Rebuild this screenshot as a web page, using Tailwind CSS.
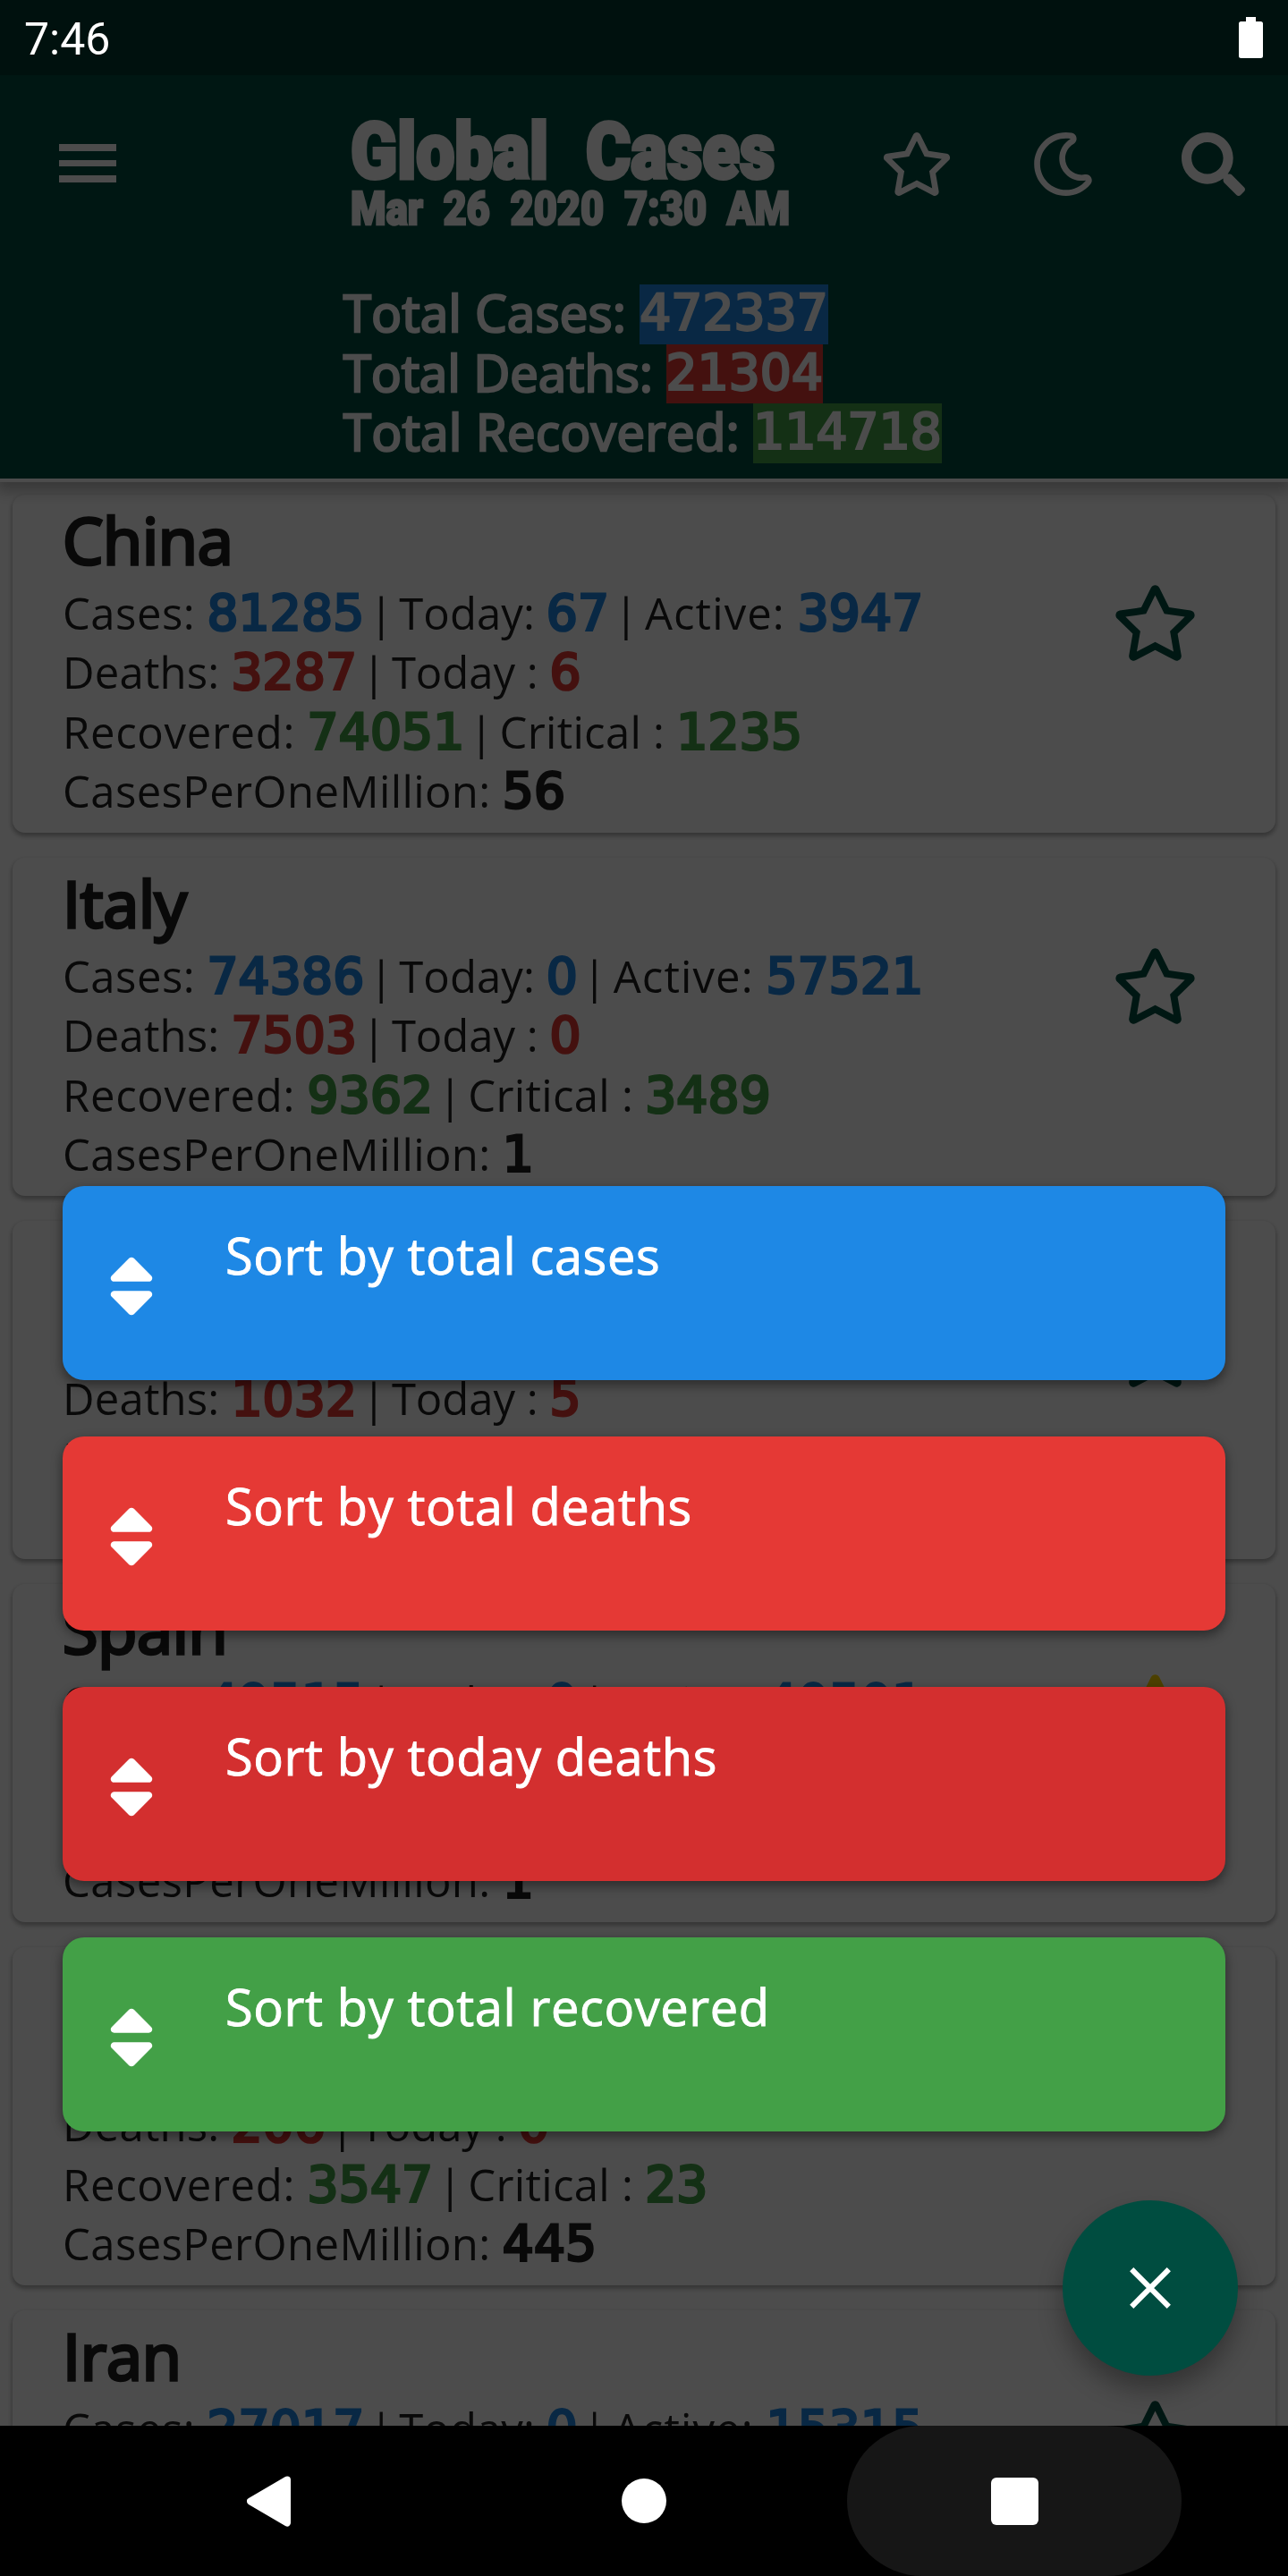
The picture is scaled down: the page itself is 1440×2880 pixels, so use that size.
<!DOCTYPE html>
<html lang="en">
<head>
<meta charset="utf-8">
<title>Global Cases</title>
<script src="https://cdn.jsdelivr.net/npm/@tailwindcss/browser@4"></script>
</head>
<body class="bg-black">
<svg class="hidden">
  <symbol id="star" viewBox="0 0 576 512"><path d="M528.1 171.5L382 150.2 316.7 17.8c-11.7-23.6-45.6-23.9-57.4 0L194 150.2 47.9 171.5c-26.2 3.8-36.7 36.1-17.7 54.6l105.7 103-25 145.5c-4.5 26.3 23.2 46 46.4 33.7L288 439.6l130.7 68.7c23.2 12.2 50.9-7.4 46.4-33.7l-25-145.5 105.7-103c19-18.5 8.5-50.8-17.7-54.6zM388.6 312.3l23.7 138.4L288 385.4l-124.3 65.3 23.7-138.4-100.6-98 139-20.2 62.2-126 62.2 126 139 20.2-100.6 98z"/></symbol>
  <symbol id="star-solid" viewBox="0 0 576 512"><path d="M528.1 171.5L382 150.2 316.7 17.8c-11.7-23.6-45.6-23.9-57.4 0L194 150.2 47.9 171.5c-26.2 3.8-36.7 36.1-17.7 54.6l105.7 103-25 145.5c-4.5 26.3 23.2 46 46.4 33.7L288 439.6l130.7 68.7c23.2 12.2 50.9-7.4 46.4-33.7l-25-145.5 105.7-103c19-18.5 8.5-50.8-17.7-54.6z"/></symbol>
  <symbol id="sort" viewBox="0 0 320 512"><path d="M41 288h238c21.4 0 32.1 25.9 17 41L177 448c-9.4 9.4-24.6 9.4-33.9 0L24 329c-15.1-15.1-4.4-41 17-41zm255-105L177 64c-9.4-9.4-24.6-9.4-33.9 0L24 183c-15.1 15.1-4.4 41 17 41h238c21.4 0 32.1-25.9 17-41z"/></symbol>
</svg>
<div class="relative flex h-[2880px] w-[1440px] flex-col overflow-hidden font-['Open_Sans',sans-serif]">

  <!-- App content -->
  <div class="isolate flex h-[2712px] flex-col overflow-hidden bg-white">
    <header class="relative z-10 h-[535px] shrink-0 bg-[#004d40] text-white shadow-[0_4px_0_#fdfdfd,0_10px_16px_4px_rgba(0,0,0,0.28)]">
      <div class="h-[84px] bg-black/25"></div>
      <div class="flex h-[200px] items-start pt-16 pl-[66px]">
        <div class="mt-[13px] flex w-[64px] flex-col gap-[10px]">
          <div class="h-[7.5px] bg-white"></div><div class="h-[7.5px] bg-white"></div><div class="h-[7.5px] bg-white"></div>
        </div>
        <div class="-mt-[22px] ml-[262px] w-[593px] whitespace-nowrap font-['Roboto',sans-serif] font-black">
          <div class="origin-left scale-x-[0.88] text-[87px] leading-[86px] [word-spacing:26px] [-webkit-text-stroke:4px_white]">Global Cases</div>
          <div class="-mt-[4px] origin-left scale-x-[0.87] text-[52px] leading-[52px] [word-spacing:13px] [-webkit-text-stroke:2.4px_white]">Mar 26 2020 7:30 AM</div>
        </div>
        <svg class="h-[71px] w-[80px]" fill="#fff"><use href="#star"/></svg>
        <svg class="ml-[88px] h-[71px] w-[71px]" viewBox="0 0 512 512" fill="#fff"><path d="M279.135 512c78.756 0 150.982-35.804 198.844-94.775 28.27-34.831-2.558-85.722-46.249-77.401-82.348 15.683-158.272-47.268-158.272-130.792 0-48.424 26.06-92.292 67.434-115.836 38.745-22.05 28.999-80.788-15.022-88.919A257.936 257.936 0 0 0 279.135 0c-141.36 0-256 114.575-256 256 0 141.36 114.576 256 256 256zm0-464c12.985 0 25.689 1.201 38.016 3.478-54.76 31.163-91.693 90.042-91.693 157.554 0 113.848 103.641 199.2 215.252 177.944C402.574 433.964 344.366 464 279.135 464c-114.875 0-208-93.125-208-208s93.125-208 208-208z"/></svg>
        <svg class="ml-[97px] h-[71px] w-[71px]" viewBox="0 0 512 512" fill="#fff"><path d="M505 442.7L405.3 343c-4.5-4.5-10.6-7-17-7H372c27.6-35.3 44-79.7 44-128C416 93.1 322.9 0 208 0S0 93.1 0 208s93.1 208 208 208c48.3 0 92.7-16.4 128-44v16.3c0 6.4 2.5 12.5 7 17l99.7 99.7c9.4 9.4 24.6 9.4 33.9 0l28.3-28.3c9.4-9.4 9.4-24.6.1-34zM208 336c-70.7 0-128-57.2-128-128 0-70.7 57.2-128 128-128 70.7 0 128 57.2 128 128 0 70.7-57.2 128-128 128z"/></svg>
      </div>
      <div class="flex flex-col pt-[34px] pl-[384px] text-[56px] leading-[63px] whitespace-pre [-webkit-text-stroke:2.6px_white]">
        <div class="flex h-[66.6px] tracking-[0.5px]">Total Cases: <span class="bg-[#1e88e5] font-['DejaVu_Sans'] text-[55px] tracking-[0.1px]">472337</span></div>
        <div class="flex h-[66.6px] tracking-[0.2px]">Total Deaths: <span class="bg-[#e53935] font-['DejaVu_Sans'] text-[55px] tracking-[0.1px]">21304</span></div>
        <div class="flex h-[66.6px] tracking-[0.6px]">Total Recovered: <span class="bg-[#43a047] font-['DejaVu_Sans'] text-[55px] tracking-[0.1px]">114718</span></div>
      </div>
    </header>
    <main id="list" class="flex flex-col gap-7 px-[14px] pt-[18px]"></main>
  </div>

  <!-- Scrim -->
  <div class="absolute inset-x-0 top-0 h-[2712px] bg-black/70"></div>

  <!-- Status bar -->
  <div class="absolute inset-x-0 top-0 flex h-[84px] items-center justify-between pr-7 pl-[27px] text-white">
    <span class="pt-[4px] font-['Roboto',sans-serif] text-[50px] leading-none">7:46</span>
    <svg class="h-[46px] w-[27px]" viewBox="0 0 27 46" fill="#fff"><path d="M8 0h11v5h5.500a2.500 2.500 0 0 1 2.500 2.500v36a2.500 2.500 0 0 1-2.500 2.500h-22a2.500 2.500 0 0 1-2.500-2.500v-36a2.500 2.500 0 0 1 2.500-2.500H8z"/></svg>
  </div>

  <!-- Sort menu -->
  <div class="absolute inset-x-[70px] top-[1326px] flex flex-col gap-[63px] text-[56px] leading-[66px] tracking-[0.6px] text-white [-webkit-text-stroke:0.9px_white]">
    <div class="flex h-[217px] items-start rounded-[24px] bg-[#1e88e5] pl-[51px] shadow-[0_5px_12px_1px_rgba(0,0,0,0.4)]"><svg class="mt-[70px] h-[84px] w-[52px]" fill="#fff"><use href="#sort"/></svg><span class="mt-[44px] ml-[79px]">Sort by total cases</span></div>
    <div class="flex h-[217px] items-start rounded-[24px] bg-[#e53935] pl-[51px] shadow-[0_5px_12px_1px_rgba(0,0,0,0.4)]"><svg class="mt-[70px] h-[84px] w-[52px]" fill="#fff"><use href="#sort"/></svg><span class="mt-[44px] ml-[79px]">Sort by total deaths</span></div>
    <div class="flex h-[217px] items-start rounded-[24px] bg-[#d32f2f] pl-[51px] shadow-[0_5px_12px_1px_rgba(0,0,0,0.4)]"><svg class="mt-[70px] h-[84px] w-[52px]" fill="#fff"><use href="#sort"/></svg><span class="mt-[44px] ml-[79px]">Sort by today deaths</span></div>
    <div class="flex h-[217px] items-start rounded-[24px] bg-[#43a047] pl-[51px] shadow-[0_5px_12px_1px_rgba(0,0,0,0.4)]"><svg class="mt-[70px] h-[84px] w-[52px]" fill="#fff"><use href="#sort"/></svg><span class="mt-[44px] ml-[79px]">Sort by total recovered</span></div>
  </div>

  <!-- Close button -->
  <div class="absolute top-[2460px] left-[1188px] flex size-[196px] items-center justify-center rounded-full bg-[#004d40] shadow-[0_16px_28px_rgba(0,0,0,0.32)]">
    <svg class="size-[46px]" viewBox="0 0 46 46" stroke="#fff" stroke-width="6"><path d="M2.200 2.200L43.800 43.800M43.800 2.200L2.200 43.800"/></svg>
  </div>

  <!-- Navigation bar -->
  <nav class="relative z-20 flex h-[168px] items-center bg-black pl-[276px]">
    <svg class="h-[57px] w-[49px]" viewBox="0 0 49 57" fill="#fff" stroke="#fff" stroke-width="8" stroke-linejoin="round"><path d="M45 4.500L4 28.500L45 52.500z"/></svg>
    <div class="ml-[370px] size-[50px] rounded-full bg-white"></div>
    <div class="ml-[202px] flex h-[168px] w-[374px] items-center justify-center rounded-full bg-[#161616]"><div class="size-[53px] rounded-[6px] bg-white"></div></div>
  </nav>
</div>
<script>
const countries = [
  ["China", 81285, 67, 3947, 3287, 6, 74051, 1235, 56],
  ["Italy", 74386, 0, 57521, 7503, 0, 9362, 3489, 1],
  ["USA", 68472, 261, 67046, 1032, 5, 394, 1455, 207],
  ["Spain", 49515, 0, 40501, 3647, 0, 5367, 3166, 1, true],
  ["Germany", 37323, 0, 33570, 206, 0, 3547, 23, 445],
  ["Iran", 27017, 0, 15315, 2077, 0, 9625, 0, 322],
];
const color = {
  blue: "text-[#1e88e5]",
  red: "text-[#e53935]",
  green: "text-[#43a047]",
  black: "",
};
const n = (v, c) => `<span class="${color[c]} font-['DejaVu_Sans'] text-[55px] tracking-[0.2px] [-webkit-text-stroke:3px]">${v}</span>`;
const bar = `<span class="ml-[12px] flex w-[14px] justify-center">|</span>`;
const row = (html) => `<div class="flex">${html}</div>`;
document.getElementById("list").innerHTML = countries.map(([name, cases, today, active, deaths, dToday, rec, crit, perM, fav]) => `
  <section class="flex h-[378px] shrink-0 justify-between rounded-[14px] bg-white pr-[87px] pl-[56px] text-[#212121] shadow-[0_3px_5px_1px_rgba(0,0,0,0.3)]">
    <div class="whitespace-pre text-[49px] leading-[66.4px] tracking-[0.4px]"><h2 class="h-[99px] pt-[2px] text-[72px] leading-[96px] tracking-[-0.3px] [-webkit-text-stroke:3.4px]">${name}</h2>${
      row(`<span class="tracking-[0.5px]">Cases: </span>` + n(cases, "blue") + bar + `<span class="tracking-[0.1px]"> Today: </span>` + n(today, "blue") + bar + `<span class="tracking-[1.1px]"> Active: </span>` + n(active, "blue")) +
      row(`<span class="tracking-[0.2px]">Deaths: </span>` + n(deaths, "red") + bar + `<span class="tracking-[0px]"> Today : </span>` + n(dToday, "red")) +
      row(`<span class="tracking-[0.7px]">Recovered: </span>` + n(rec, "green") + bar + `<span class="tracking-[0.3px]"> Critical : </span>` + n(crit, "green")) +
      row("CasesPerOneMillion: " + n(perM, "black"))
    }</div>
    <svg class="mt-[101px] h-[85px] w-[95px] ${fav ? "fill-[#fdd800]" : "fill-[#004d40]"}"><use href="${fav ? "#star-solid" : "#star"}"/></svg>
  </section>`).join("");
</script>
</body>
</html>
